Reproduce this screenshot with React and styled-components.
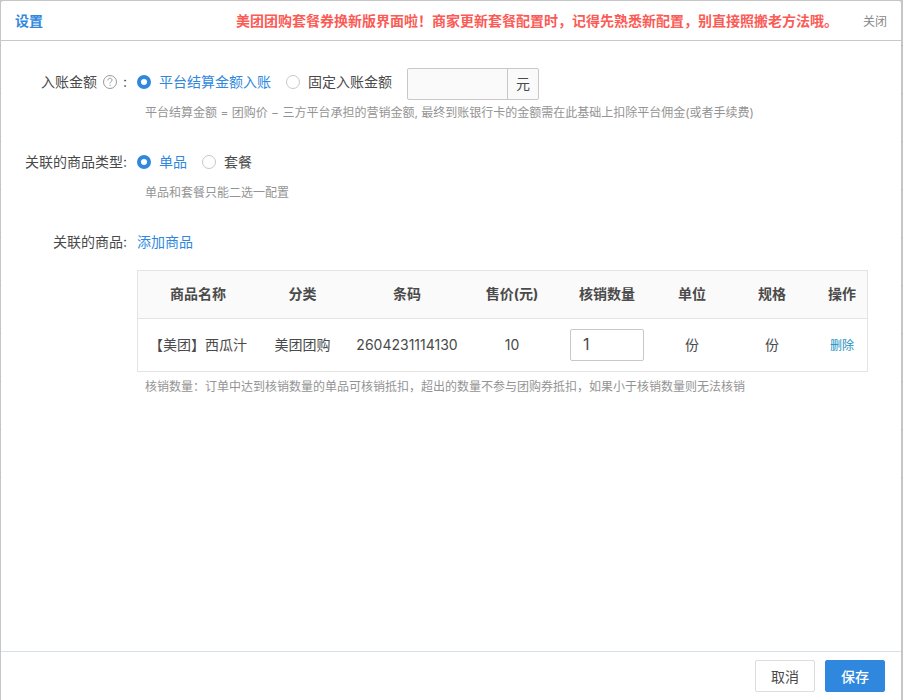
import React, { useState } from 'react';
import styled, { createGlobalStyle } from 'styled-components';

const columns = [
  { title: '商品名称', width: 120 },
  { title: '分类', width: 89 },
  { title: '条码', width: 120 },
  { title: '售价(元)', width: 90 },
  { title: '核销数量', width: 100 },
  { title: '单位', width: 70 },
  { title: '规格', width: 90 },
  { title: '操作', width: 50 },
];

const App = () => {
  const [amountType, setAmountType] = useState('platform');
  const [amount, setAmount] = useState('');
  const [goodsType, setGoodsType] = useState('single');
  const [goods, setGoods] = useState([
    { name: '【美团】西瓜汁', category: '美团团购', code: '2604231114130', price: 10, count: '1', unit: '份', spec: '份' },
  ]);

  const handleCount = (idx, count) => {
    setGoods((prev) => prev.map((item, i) => (i === idx ? { ...item, count } : item)));
  };

  const handleDelete = (idx) => {
    setGoods((prev) => prev.filter((item, i) => i !== idx));
  };

  return (
    <Backdrop>
      <GlobalStyle />
      <Dialog role="dialog" aria-labelledby="title">
        <Header>
          <Title id="title">设置</Title>
          <Notice>美团团购套餐券换新版界面啦！商家更新套餐配置时，记得先熟悉新配置，别直接照搬老方法哦。</Notice>
          <CloseButton type="button">关闭</CloseButton>
        </Header>

        <Body>
          <FormRow role="radiogroup" aria-labelledby="amount-label">
            <RowLabel id="amount-label">
              入账金额
              <HelpIcon viewBox="0 0 14 14" aria-hidden="true">
                <circle cx="7" cy="7" r="6.5" />
                <path d="M5 5.4C5 4 5.8 3.2 7 3.2s2 .8 2 1.9c0 1.5-2 1.7-2 3.3" />
                <path d="M7 9.7v1.2" />
              </HelpIcon>
              :
            </RowLabel>
            <RowContent>
              <Controls>
                <RadioLabel>
                  <Radio name="amount" checked={amountType === 'platform'} onChange={() => setAmountType('platform')} />
                  <span>平台结算金额入账</span>
                </RadioLabel>
                <RadioLabel>
                  <Radio name="amount" checked={amountType === 'fixed'} onChange={() => setAmountType('fixed')} />
                  <span>固定入账金额</span>
                </RadioLabel>
                <InputGroup>
                  <AmountInput
                    aria-label="固定入账金额"
                    value={amount}
                    disabled={amountType !== 'fixed'}
                    onChange={(e) => setAmount(e.target.value)}
                  />
                  <Addon>元</Addon>
                </InputGroup>
              </Controls>
              <Hint>平台结算金额 = 团购价 − 三方平台承担的营销金额, 最终到账银行卡的金额需在此基础上扣除平台佣金(或者手续费)</Hint>
            </RowContent>
          </FormRow>

          <FormRow role="radiogroup" aria-labelledby="type-label">
            <RowLabel id="type-label">关联的商品类型:</RowLabel>
            <RowContent>
              <Controls>
                <RadioLabel>
                  <Radio name="goods" checked={goodsType === 'single'} onChange={() => setGoodsType('single')} />
                  <span>单品</span>
                </RadioLabel>
                <RadioLabel>
                  <Radio name="goods" checked={goodsType === 'combo'} onChange={() => setGoodsType('combo')} />
                  <span>套餐</span>
                </RadioLabel>
              </Controls>
              <Hint>单品和套餐只能二选一配置</Hint>
            </RowContent>
          </FormRow>

          <FormRow>
            <RowLabel>关联的商品:</RowLabel>
            <RowContent>
              <Controls>
                <AddLink href="#add">添加商品</AddLink>
              </Controls>
              <Table>
                <colgroup>
                  {columns.map((col) => <Col key={col.title} $width={col.width} />)}
                </colgroup>
                <thead>
                  <tr>
                    {columns.map((col) => <HeadCell key={col.title}>{col.title}</HeadCell>)}
                  </tr>
                </thead>
                <tbody>
                  {goods.map((item, idx) => (
                    <tr key={item.code}>
                      <Cell>{item.name}</Cell>
                      <Cell>{item.category}</Cell>
                      <Cell>{item.code}</Cell>
                      <Cell>{item.price}</Cell>
                      <Cell>
                        <CountInput
                          aria-label="核销数量"
                          value={item.count}
                          onChange={(e) => handleCount(idx, e.target.value)}
                        />
                      </Cell>
                      <Cell>{item.unit}</Cell>
                      <Cell>{item.spec}</Cell>
                      <Cell>
                        <DeleteButton type="button" onClick={() => handleDelete(idx)}>删除</DeleteButton>
                      </Cell>
                    </tr>
                  ))}
                </tbody>
              </Table>
              <Hint>核销数量：订单中达到核销数量的单品可核销抵扣，超出的数量不参与团购券抵扣，如果小于核销数量则无法核销</Hint>
            </RowContent>
          </FormRow>
        </Body>

        <Footer>
          <Button type="button">取消</Button>
          <Button type="button" $primary>保存</Button>
        </Footer>
      </Dialog>
    </Backdrop>
  );
};

const GlobalStyle = createGlobalStyle`
  * {
    box-sizing: border-box;
  }

  body {
    margin: 0;
    color: #4a4a4a;
    font-family: Inter, "Noto Sans CJK SC", sans-serif;
    font-size: 14px;
    line-height: 20px;
  }

  button, input {
    font-family: inherit;
    color: inherit;
  }
`;

/* the dimmed list behind the dialog shows its row lines at the edges */
const Backdrop = styled.div`
  min-height: 100vh;
  display: flex;
  padding: 1px 2px 0 1px;
  background:
    repeating-linear-gradient(transparent 0 45px, #b8b8b8 45px 46px, transparent 46px 48px) 0 0 / 100% 480px no-repeat,
    #c6c6c6;
`;

const Dialog = styled.div`
  flex: 1;
  min-width: 0;
  display: flex;
  flex-direction: column;
  background: #fff;
  border-radius: 2px 2px 0 0;
`;

const Header = styled.header`
  display: flex;
  align-items: center;
  height: 40px;
  padding: 0 14px;
  border-bottom: 1px solid #c8c8c8;
`;

const Title = styled.h1`
  flex: 1;
  margin: 0;
  font-size: 14px;
  font-weight: 700;
  color: #3088de;
`;

const Notice = styled.strong`
  margin-right: 25px;
  font-weight: 700;
  color: #fb5b56;
`;

const CloseButton = styled.button`
  padding: 0;
  border: 0;
  background: none;
  font-size: 12px;
  color: #888;
  cursor: pointer;
`;

const Body = styled.main`
  flex: 1;
  display: flex;
  flex-direction: column;
  gap: 22px;
  padding: 27px 34px 24px 0;
`;

const FormRow = styled.section`
  display: flex;
  gap: 10px;
`;

const RowLabel = styled.div`
  display: flex;
  flex: none;
  align-items: center;
  justify-content: flex-end;
  gap: 6px;
  width: 126px;
  height: 28px;
  line-height: 28px;
`;

const HelpIcon = styled.svg`
  width: 14px;
  height: 14px;
  fill: none;
  stroke: #999;
  stroke-width: 1;
`;

const RowContent = styled.div`
  flex: 1;
  min-width: 0;
`;

const Controls = styled.div`
  display: flex;
  gap: 15px;
  min-height: 32px;
  line-height: 28px;
`;

const RadioLabel = styled.label`
  display: flex;
  align-items: center;
  gap: 8px;
  height: 28px;
  cursor: pointer;
`;

const Radio = styled.input.attrs({ type: 'radio' })`
  appearance: none;
  width: 14px;
  height: 14px;
  margin: 0;
  border: 1px solid #c8c8c8;
  border-radius: 50%;
  background: #fff;

  &:checked {
    border: 4px solid #3088de;
  }

  &:checked + span {
    color: #3088de;
  }
`;

const InputGroup = styled.div`
  display: flex;
  width: 132px;
  height: 32px;
  border: 1px solid #c8c8c8;
  border-radius: 2px;
  background: #fafafa;
`;

const AmountInput = styled.input`
  flex: 1;
  min-width: 0;
  padding: 0 12px;
  border: 0;
  background: none;
  font-size: 14px;
`;

const Addon = styled.span`
  width: 31px;
  border-left: 1px solid #c8c8c8;
  line-height: 30px;
  text-align: center;
`;

const Hint = styled.p`
  margin: 0;
  padding-left: 8px;
  font-size: 12px;
  line-height: 26px;
  color: #949494;
`;

const AddLink = styled.a`
  color: #3088de;
  text-decoration: none;
`;

const Table = styled.table`
  width: 100%;
  margin: 10px 0 2px;
  border: 1px solid #e4e4e4;
  border-collapse: separate;
  border-spacing: 0;
  table-layout: fixed;
`;

const Col = styled.col`
  width: ${(props) => props.$width}px;
`;

const HeadCell = styled.th`
  height: 48px;
  padding: 0 0 2px;
  border-bottom: 1px solid #e4e4e4;
  background: #fafafa;
  font-weight: 700;
  text-align: center;
`;

const Cell = styled.td`
  height: 52px;
  padding: 0;
  text-align: center;
  white-space: nowrap;
`;

const CountInput = styled.input`
  width: 74px;
  height: 32px;
  padding: 0 12px 2px;
  border: 1px solid #c8c8c8;
  border-radius: 2px;
  font-size: 16px;
  vertical-align: middle;
`;

const DeleteButton = styled.button`
  padding: 0;
  border: 0;
  background: none;
  font-size: 12px;
  color: #2090c0;
  cursor: pointer;
`;

const Footer = styled.footer`
  display: flex;
  justify-content: flex-end;
  gap: 10px;
  padding: 8px 16px;
  border-top: 1px solid #d5e0ea;
`;

const Button = styled.button`
  width: 60px;
  height: 32px;
  padding: 0;
  border: 1px solid ${(props) => (props.$primary ? '#3088de' : '#dcdcdc')};
  border-radius: 2px;
  background: ${(props) => (props.$primary ? '#3088de' : '#fff')};
  color: ${(props) => (props.$primary ? '#fff' : '#4a4a4a')};
  font-size: 14px;
  font-weight: ${(props) => (props.$primary ? 500 : 400)};
  cursor: pointer;
`;

export default App;
